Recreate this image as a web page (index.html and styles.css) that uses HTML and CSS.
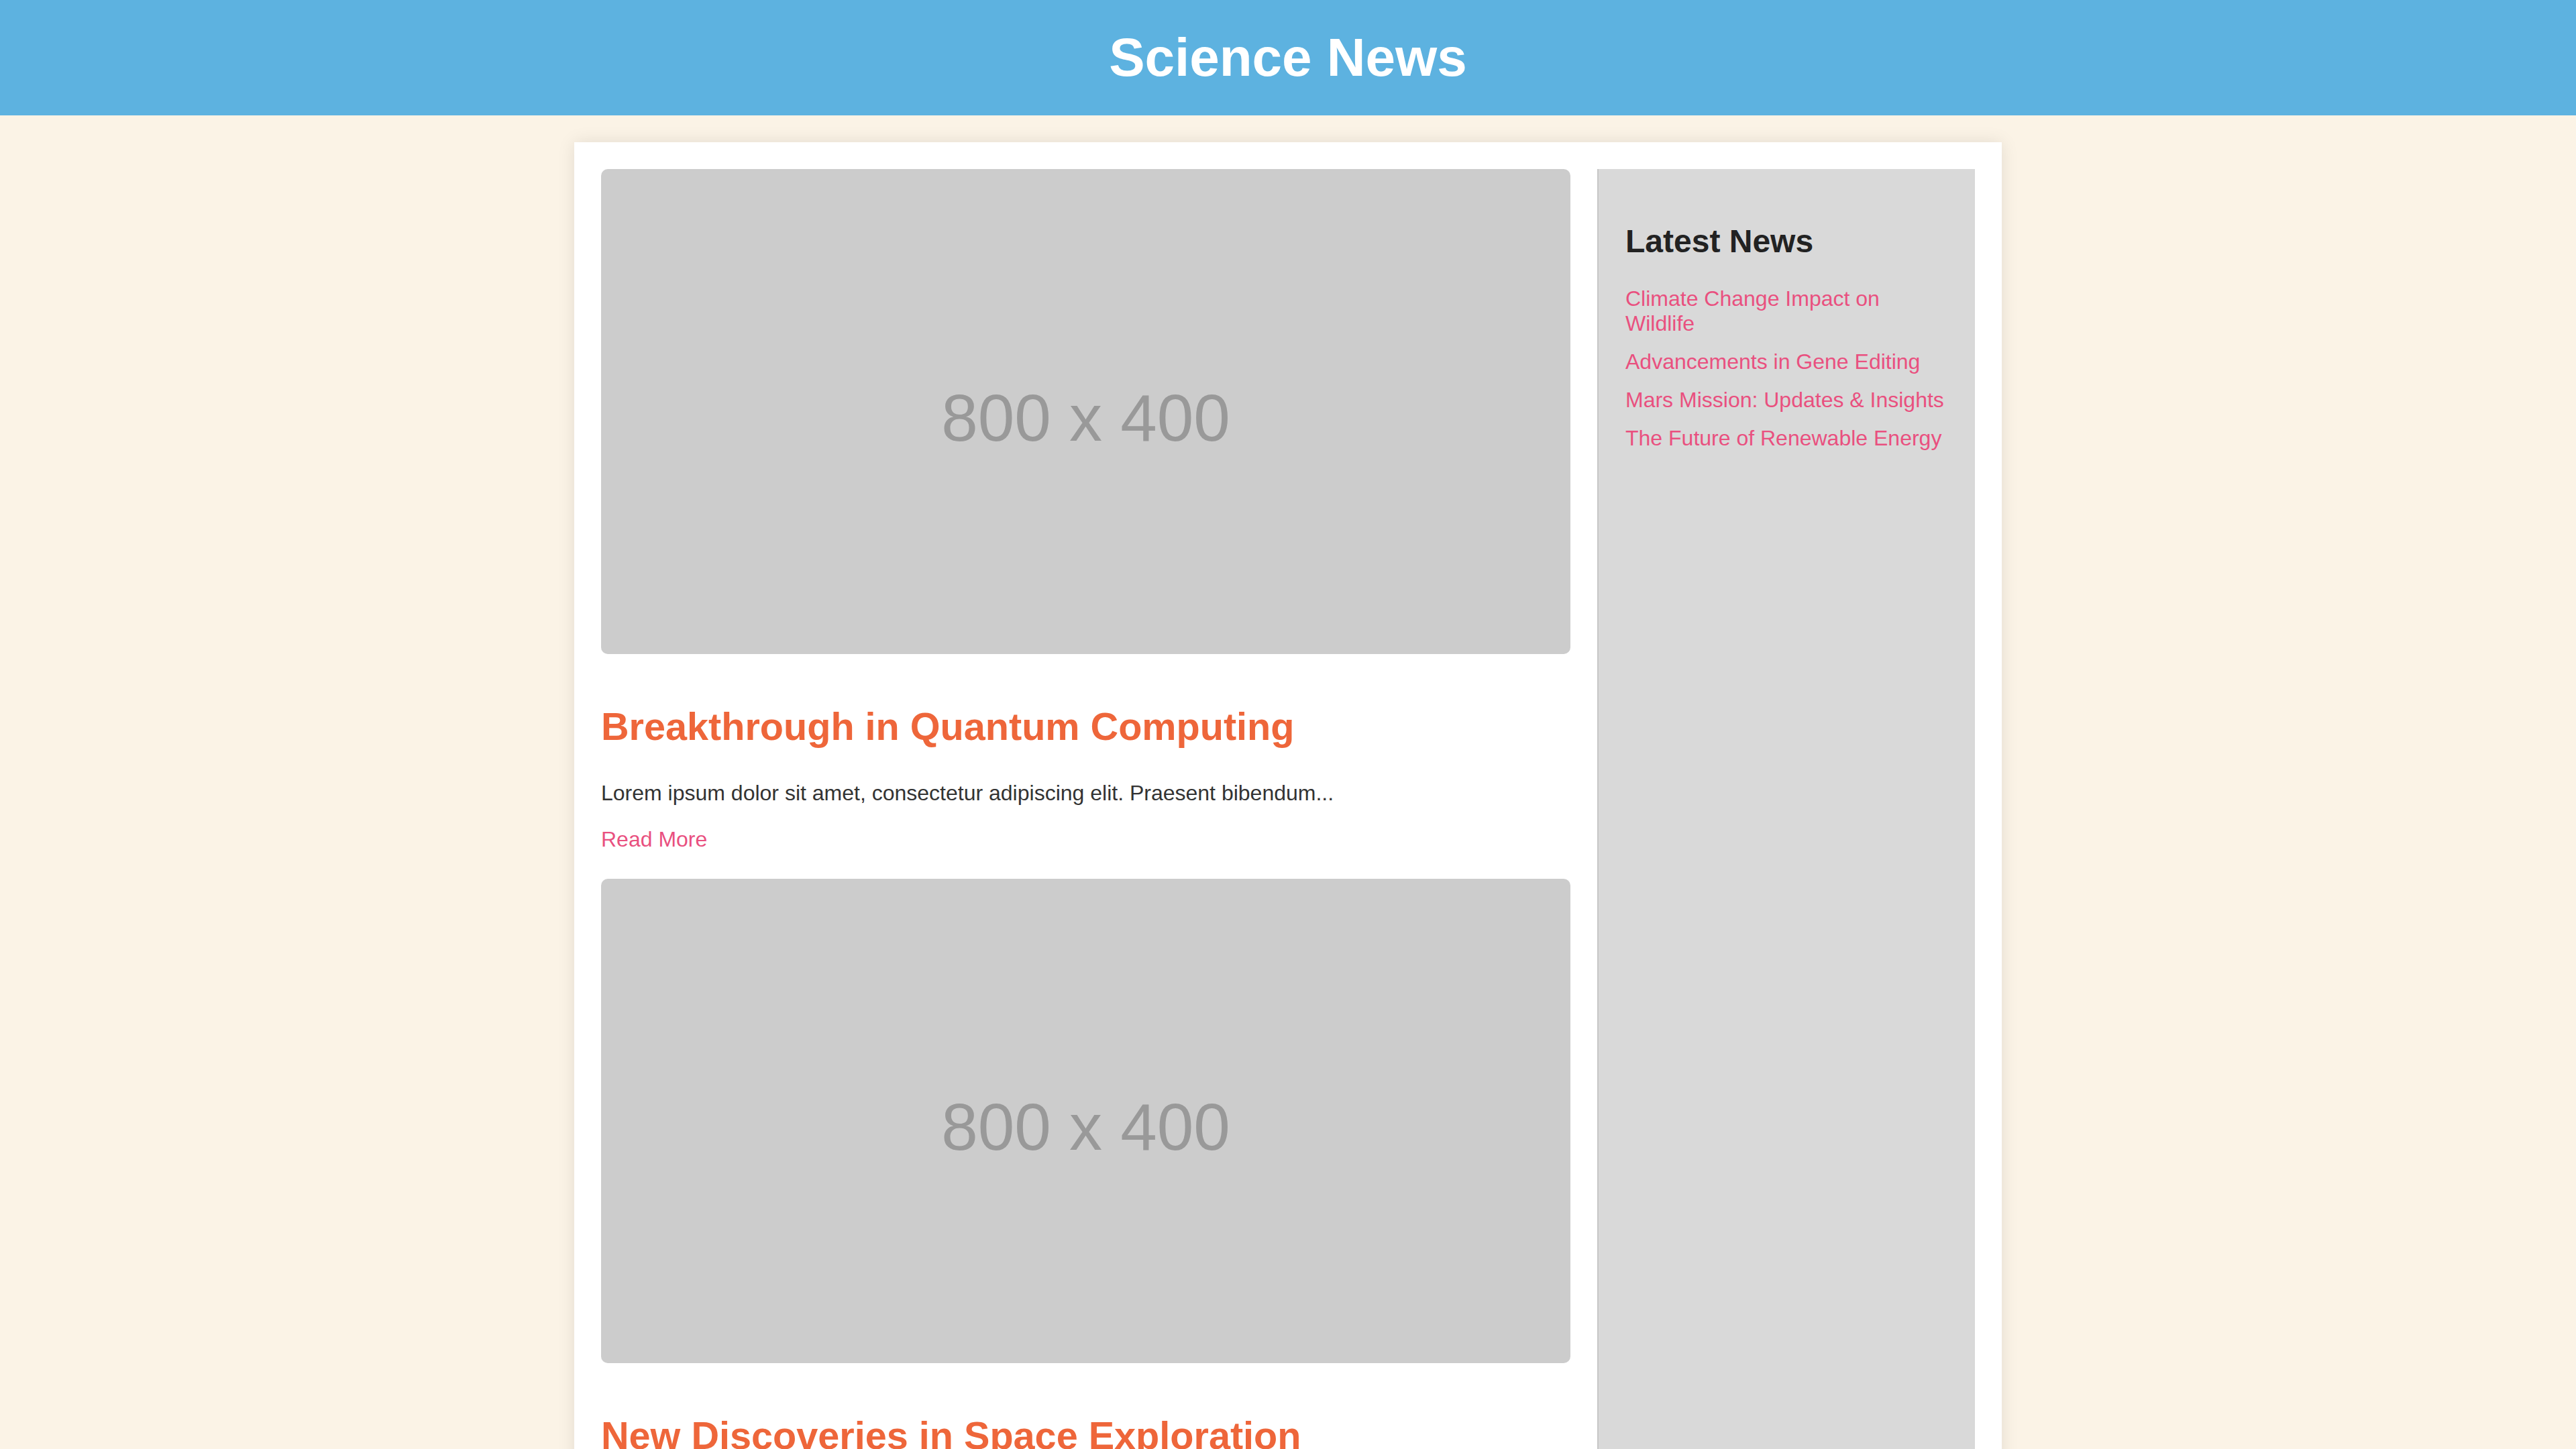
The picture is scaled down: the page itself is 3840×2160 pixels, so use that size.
FILE: index.html
```html
<!DOCTYPE html>
<html lang="en">
<head>
<meta charset="utf-8">
<title>Science News</title>
<link rel="stylesheet" href="styles.css">
</head>
<body>
<header class="site-header">
  <h1 class="site-title">Science News</h1>
</header>
<div class="container">
  <main class="articles">
    <article class="article">
      <div class="placeholder">800 x 400</div>
      <h2 class="article-title">Breakthrough in Quantum Computing</h2>
      <p class="article-text">Lorem ipsum dolor sit amet, consectetur adipiscing elit. Praesent bibendum...</p>
      <p class="article-more"><a href="#" class="link">Read More</a></p>
    </article>
    <article class="article">
      <div class="placeholder">800 x 400</div>
      <h2 class="article-title">New Discoveries in Space Exploration</h2>
      <p class="article-text">Lorem ipsum dolor sit amet, consectetur adipiscing elit. Praesent bibendum...</p>
      <p class="article-more"><a href="#" class="link">Read More</a></p>
    </article>
  </main>
  <aside class="sidebar">
    <h3 class="sidebar-title">Latest News</h3>
    <ul class="news-list">
      <li class="news-item"><a href="#" class="link">Climate Change Impact on Wildlife</a></li>
      <li class="news-item"><a href="#" class="link">Advancements in Gene Editing</a></li>
      <li class="news-item"><a href="#" class="link">Mars Mission: Updates &amp; Insights</a></li>
      <li class="news-item"><a href="#" class="link">The Future of Renewable Energy</a></li>
    </ul>
  </aside>
</div>
</body>
</html>
```

FILE: styles.css
```css
* {
  box-sizing: border-box;
}

body {
  margin: 0;
  background: #fbf3e6;
  font-family: "Liberation Sans", Arial, Helvetica, sans-serif;
  color: #333333;
}

.site-header {
  background: #5db2e0;
  padding: 40px 0;
  text-align: center;
}

.site-title {
  margin: 0;
  font-size: 80px;
  font-weight: 700;
  color: #ffffff;
  line-height: normal;
}

.container {
  width: 2128px;
  margin: 40px auto 0;
  padding: 40px;
  background: #ffffff;
  box-shadow: 0 0 24px rgba(0, 0, 0, 0.1);
  display: flex;
  gap: 40px;
  align-items: stretch;
}

.articles {
  flex: 1;
  min-width: 0;
}

.article {
  margin-bottom: 40px;
}

.placeholder {
  width: 100%;
  aspect-ratio: 2 / 1;
  background: #cccccc;
  border-radius: 10px;
  color: #999999;
  font-size: 98px;
  display: flex;
  align-items: center;
  justify-content: center;
  padding-top: 20px;
}

.article-title {
  margin: 75px 0 48px;
  font-size: 57.6px;
  font-weight: 700;
  color: #ee663a;
  line-height: normal;
}

.article-text {
  margin: 0 0 32px;
  font-size: 32px;
  color: #333333;
  line-height: normal;
}

.article-more {
  margin: 0;
  font-size: 32px;
  line-height: normal;
}

.link {
  color: #e9507f;
  text-decoration: none;
}

.sidebar {
  width: 563px;
  flex: none;
  background: #d9d9d9;
  border-left: 2px solid #c6c6c6;
  padding: 40px;
}

.sidebar-title {
  margin: 40px 0 40px;
  font-size: 48px;
  font-weight: 700;
  color: #222222;
  line-height: normal;
}

.news-list {
  list-style: none;
  margin: 0;
  padding: 0;
}

.news-item {
  margin-bottom: 20px;
  font-size: 32px;
  line-height: normal;
}
```
